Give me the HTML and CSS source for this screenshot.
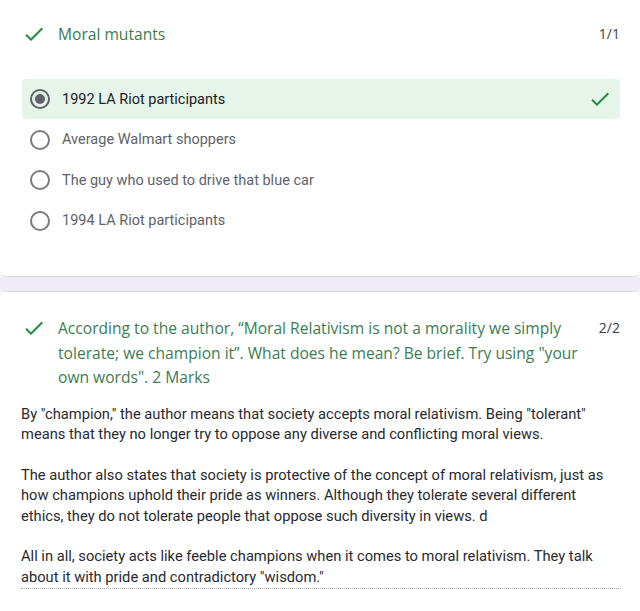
FILE: index.html
```html
<!DOCTYPE html>
<html>
<head>
<meta charset="utf-8">
<link rel="stylesheet" href="styles.css">
</head>
<body>
<div class="card card-top">
  <div class="q-head">
    <svg class="check" viewBox="0 0 24 24" width="24" height="24"><path d="M9 16.2 4.8 12l-1.4 1.4L9 19 21 7l-1.4-1.4z" fill="#1e8e3e"/></svg>
    <div class="q-title">Moral mutants</div>
    <div class="score">1/1</div>
  </div>
  <div class="options">
    <div class="opt correct">
      <span class="radio checked"></span>
      <span class="opt-text">1992 LA Riot participants</span>
      <svg class="opt-check" viewBox="0 0 24 24" width="24" height="24"><path d="M9 16.2 4.8 12l-1.4 1.4L9 19 21 7l-1.4-1.4z" fill="#1e8e3e"/></svg>
    </div>
    <div class="opt"><span class="radio"></span><span class="opt-text">Average Walmart shoppers</span></div>
    <div class="opt"><span class="radio"></span><span class="opt-text">The guy who used to drive that blue car</span></div>
    <div class="opt"><span class="radio"></span><span class="opt-text">1994 LA Riot participants</span></div>
  </div>
</div>
<div class="band"></div>
<div class="card card-bottom">
  <div class="q-head q-head2">
    <svg class="check" viewBox="0 0 24 24" width="24" height="24"><path d="M9 16.2 4.8 12l-1.4 1.4L9 19 21 7l-1.4-1.4z" fill="#1e8e3e"/></svg>
    <div class="q-title q-long">According to the author, “Moral Relativism is not a morality we simply tolerate; we champion it”. What does he mean? Be brief. Try using "your own words". 2 Marks</div>
    <div class="score score2">2/2</div>
  </div>
  <div class="answer">
    <p>By "champion," the author means that society accepts moral relativism. Being "tolerant" means that they no longer try to oppose any diverse and conflicting moral views.</p>
    <p>The author also states that society is protective of the concept of moral relativism, just as how champions uphold their pride as winners. Although they tolerate several different ethics, they do not tolerate people that oppose such diversity in views. d</p>
    <p>All in all, society acts like feeble champions when it comes to moral relativism. They talk about it with pride and contradictory "wisdom."</p>
  </div>
</div>
</body>
</html>
```
FILE: styles.css
```css
html, body {
  margin: 0;
  padding: 0;
  background: #fff;
  font-family: Roboto, "Liberation Sans", sans-serif;
}
.card {
  background: #fff;
}
.card-top {
  height: 277px;
  box-sizing: border-box;
  border-bottom: 1px solid #dadce0;
  border-radius: 0 0 6px 6px;
  padding-top: 22px;
}
.band {
  height: 14px;
  background: #efebf8;
}
.card-bottom {
  border-top: 1px solid #dadce0;
  border-radius: 6px 6px 0 0;
  padding-top: 24px;
}
.q-head {
  display: flex;
  align-items: flex-start;
  padding: 0 20px 0 22px;
}
.check {
  flex: none;
  margin-right: 12px;
}
.q-title {
  flex: 1;
  font-family: "Open Sans", Roboto, sans-serif;
  font-size: 15.6px;
  color: #3b7d51;
  line-height: 24px;
}
.q-long {
  padding-right: 6px;
  line-height: 24.5px;
}
.score {
  font-family: "Open Sans", Roboto, sans-serif;
  font-size: 14px;
  color: #3c4043;
  line-height: 24px;
}
.options {
  margin-top: 33px;
  display: flex;
  flex-direction: column;
}
.opt {
  display: flex;
  align-items: center;
  height: 40.5px;
  margin: 0 20px 0 22px;
  padding-left: 8px;
  border-radius: 4px;
}
.opt.correct {
  background: #e6f4ea;
  height: 40px;
  margin-bottom: 0.5px;
}
.radio {
  width: 16px;
  height: 16px;
  border: 2px solid #7a7a7a;
  border-radius: 50%;
  box-sizing: content-box;
  position: relative;
  flex: none;
}
.radio.checked {
  border-color: #5f6368;
}
.radio.checked::after {
  content: "";
  position: absolute;
  left: 3px;
  top: 3px;
  width: 10px;
  height: 10px;
  border-radius: 50%;
  background: #5f6368;
}
.opt-text {
  margin-left: 12px;
  font-size: 14.5px;
  color: #5f6368;
  flex: 1;
}
.correct .opt-text {
  color: #202124;
}
.opt-check {
  margin-right: 8px;
}
.answer {
  margin: 14px 19px 0 21px;
  padding-right: 14px;
  padding-bottom: 1px;
  border-bottom: 1px dotted #9aa0a6;
  font-size: 14.7px;
  line-height: 20.5px;
  color: #282a2d;
}
.answer p {
  margin: 0 0 20px 0;
}
.answer p:last-child {
  margin-bottom: 0;
}
```
